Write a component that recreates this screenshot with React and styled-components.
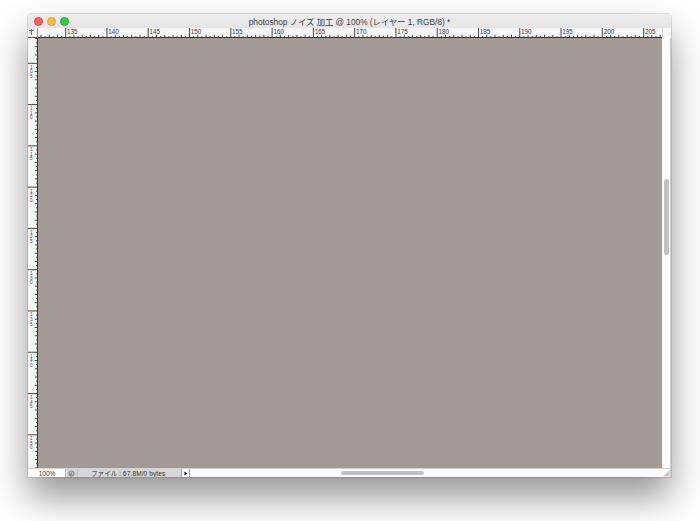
import React from 'react';
import styled, { createGlobalStyle } from 'styled-components';

const Global = createGlobalStyle`
  html, body { margin: 0; padding: 0; background: #ffffff; }
  body {
    width: 700px; height: 521px; overflow: hidden;
    font-family: "Liberation Sans", "Noto Sans CJK JP", sans-serif;
  }
`;

const Page = styled.div`
  width: 700px;
  height: 521px;
  box-sizing: border-box;
  padding: 14px 0 0 28px;
`;

const Window = styled.div`
  width: 643px;
  height: 463px;
  display: flex;
  flex-direction: column;
  border-radius: 4px 4px 0 0;
  overflow: hidden;
  background: #fafafa;
  box-shadow: 0 20px 36px rgba(0, 0, 0, 0.42), 0 0 0 1px rgba(0, 0, 0, 0.12);
`;

const TitleBar = styled.div`
  height: 14px;
  flex: none;
  display: grid;
  grid-template-columns: 1fr auto 1fr;
  align-items: center;
  background: linear-gradient(#eeeeee, #e4e4e4);
`;

const Lights = styled.div`
  display: flex;
  gap: 4px;
  padding-left: 6px;
`;

const Light = styled.span`
  width: 7px;
  height: 7px;
  border-radius: 50%;
  background: ${p => p.$c};
  border: 0.5px solid ${p => p.$b};
`;

const Title = styled.div`
  font-size: 8.3px;
  color: #3a3a3a;
  white-space: nowrap;
  line-height: 14px;
  padding-top: 1px;
`;

const Body = styled.div`
  flex: 1;
  display: grid;
  grid-template-columns: 10px 1fr 9px;
  grid-template-rows: 10px 1fr 9px;
`;

const Corner = styled.div`
  background: #f4f4f4;
  border-right: 1px solid #9a9a9a;
  border-bottom: 1px solid #555;
  box-sizing: border-box;
  display: flex;
  align-items: flex-end;
  justify-content: flex-start;
`;

const Filler = styled.div`
  background: #fafafa;
  border-left: 1px solid #d8d8d8;
`;

const RulerBox = styled.div`
  background: #f5f5f5;
  overflow: hidden;
  svg { display: block; }
`;

const Canvas = styled.div`
  background: #a19a97;
`;

const VScroll = styled.div`
  background: #fbfbfb;
  border-right: 1px solid #d0d0d0;
  box-sizing: border-box;
  padding: 141px 0 0 2px;
`;

const VThumb = styled.div`
  width: 5px;
  height: 76px;
  border-radius: 3px;
  background: #c2c2c2;
`;

const StatusBar = styled.div`
  grid-column: 1 / 3;
  display: flex;
  align-items: stretch;
  background: #fbfbfb;
  border-top: 1px solid #d2d2d2;
  box-sizing: border-box;
  font-size: 6.5px;
  color: #333;
`;

const ZoomField = styled.div`
  width: 36px;
  margin-left: 1px;
  background: #ffffff;
  border-right: 1px solid #bdbdbd;
  display: flex;
  align-items: center;
  justify-content: center;
`;

const IconCell = styled.div`
  width: 11px;
  background: #d4d4d4;
  border-right: 1px solid #c0c0c0;
  display: flex;
  align-items: center;
  justify-content: center;
`;

const Info = styled.div`
  width: 103px;
  background: #d6d6d6;
  display: flex;
  align-items: center;
  padding-left: 13px;
  box-sizing: border-box;
  white-space: nowrap;
  letter-spacing: 0.1px;
`;

const Arrow = styled.div`
  width: 7px;
  background: #ffffff;
  border-left: 1px solid #aaa;
  border-right: 1px solid #aaa;
  display: flex;
  align-items: center;
  justify-content: center;
`;

const HTrack = styled.div`
  flex: 1;
  background: #fbfbfb;
  display: flex;
  align-items: center;
  padding-left: 151px;
`;

const HThumb = styled.div`
  width: 83px;
  height: 4px;
  border-radius: 2px;
  background: #c2c2c2;
`;

const Grip = styled.div`
  background: #fbfbfb;
  border-right: 1px solid #d0d0d0;
  border-top: 1px solid #d2d2d2;
  box-sizing: border-box;
  svg { display: block; }
`;

const HRuler = () => {
  const W = 624, H = 10;
  const items = [];
  for (let i = 131 * 2; i <= 207 * 2; i++) {
    const v = i / 2;
    const x = 27.7 + (v - 135) * 8.256;
    if (x < 0 || x > W) continue;
    if (v % 5 === 0) {
      items.push(<line key={'m' + i} x1={x} x2={x} y1={0} y2={H} stroke="#333" strokeWidth="0.9" />);
      items.push(
        <text key={'t' + i} x={x + 1.3} y={5.8} fontSize="6.3" fill="#3a3a4a" fontFamily="Liberation Sans, sans-serif">{v}</text>
      );
    } else if (Number.isInteger(v)) {
      items.push(<line key={'a' + i} x1={x} x2={x} y1={H - 3.2} y2={H} stroke="#333" strokeWidth="0.9" />);
    } else {
      items.push(<line key={'b' + i} x1={x} x2={x} y1={H - 2} y2={H} stroke="#444" strokeWidth="0.9" />);
    }
  }
  return (
    <svg width={W} height={H}>
      {items}
      <line x1={0} x2={W} y1={H - 0.5} y2={H - 0.5} stroke="#333" strokeWidth="1" />
    </svg>
  );
};

const VRuler = () => {
  const W = 10, H = 430;
  const items = [];
  for (let i = 101 * 2; i <= 158 * 2; i++) {
    const v = i / 2;
    const y = 25.3 + (v - 105) * 8.256;
    if (y < 0 || y > H) continue;
    if (v % 5 === 0) {
      items.push(<line key={'m' + i} y1={y} y2={y} x1={0} x2={W} stroke="#333" strokeWidth="0.9" />);
      String(v).split('').forEach((d, k) => {
        items.push(
          <text key={'t' + i + '-' + k} x={3.2} y={y + 5.4 + k * 4.6} fontSize="4.6" textAnchor="middle" fill="#3a4a6a" fontFamily="Liberation Sans, sans-serif">{d}</text>
        );
      });
    } else if (Number.isInteger(v)) {
      items.push(<line key={'a' + i} y1={y} y2={y} x1={W - 3.2} x2={W} stroke="#333" strokeWidth="0.9" />);
    } else {
      items.push(<line key={'b' + i} y1={y} y2={y} x1={W - 2} x2={W} stroke="#444" strokeWidth="0.9" />);
    }
  }
  return (
    <svg width={W} height={H}>
      {items}
      <line y1={0} y2={H} x1={W - 0.5} x2={W - 0.5} stroke="#333" strokeWidth="1" />
    </svg>
  );
};

export default function App() {
  return (
    <>
      <Global />
      <Page>
        <Window>
          <TitleBar>
            <Lights>
              <Light $c="#fc605c" $b="#de4a46" />
              <Light $c="#fdbc40" $b="#dea236" />
              <Light $c="#34c84a" $b="#27aa35" />
            </Lights>
            <Title>photoshop ノイズ 加工 @ 100% (レイヤー 1, RGB/8) *</Title>
            <div />
          </TitleBar>
          <Body>
            <Corner>
              <svg width="9" height="9">
                <path d="M1 2.5 H6 M3.5 1 V7" stroke="#4a5a7a" strokeWidth="0.8" fill="none" />
                <path d="M1.5 5 L5 1.5" stroke="#4a5a7a" strokeWidth="0.6" fill="none" />
              </svg>
            </Corner>
            <RulerBox><HRuler /></RulerBox>
            <Filler />
            <RulerBox><VRuler /></RulerBox>
            <Canvas />
            <VScroll><VThumb /></VScroll>
            <StatusBar>
              <ZoomField>100%</ZoomField>
              <IconCell>
                <svg width="7" height="7" viewBox="0 0 7 7">
                  <circle cx="3.5" cy="3.5" r="3" fill="#8a8a8a" />
                  <path d="M2 3.5 A1.5 1.5 0 1 1 3.5 5" stroke="#e0e0e0" strokeWidth="0.9" fill="none" />
                </svg>
              </IconCell>
              <Info>ファイル : 67.8M/0 bytes</Info>
              <Arrow>
                <svg width="4" height="5" viewBox="0 0 4 5">
                  <path d="M0.5 0.5 L3.5 2.5 L0.5 4.5 Z" fill="#111" />
                </svg>
              </Arrow>
              <HTrack><HThumb /></HTrack>
            </StatusBar>
            <Grip>
              <svg width="8" height="8" viewBox="0 0 8 8">
                <path d="M7.5 1 L7.5 7.5 L1 7.5 Z" fill="#c8c8c8" />
              </svg>
            </Grip>
          </Body>
        </Window>
      </Page>
    </>
  );
}
